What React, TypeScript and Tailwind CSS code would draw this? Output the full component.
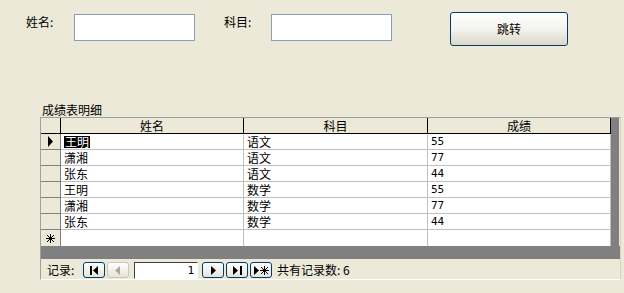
const rows = [
  { name: '王明', subject: '语文', score: '55' },
  { name: '潇湘', subject: '语文', score: '77' },
  { name: '张东', subject: '语文', score: '44' },
  { name: '王明', subject: '数学', score: '55' },
  { name: '潇湘', subject: '数学', score: '77' },
  { name: '张东', subject: '数学', score: '44' },
];

const font = "font-['SimSun','Noto_Sans_CJK_SC',sans-serif]";

function Star({ size = 9 }: { size?: number }) {
  return (
    <svg width={size} height={size} viewBox="0 0 9 9" shapeRendering="crispEdges">
      <path d="M4.5 0 V9 M0 4.5 H9 M1 1 L8 8 M8 1 L1 8" stroke="black" strokeWidth="1" />
    </svg>
  );
}

function NavButton({ children, disabled }: { children: React.ReactNode; disabled?: boolean }) {
  return (
    <div
      className={`flex h-[16px] w-[22px] items-center justify-center rounded-[3px] border ${
        disabled ? 'border-[#c9c7ba] text-[#aca899]' : 'border-[#003c74] text-black'
      } bg-gradient-to-b from-white to-[#e6e3d6]`}
    >
      {children}
    </div>
  );
}

export default function App() {
  return (
    <div className={`h-[293px] w-[624px] overflow-hidden bg-[#ece9d8] text-[12px] leading-none text-black ${font}`}>
      <div className="flex items-start pt-[12px]">
        <div className="ml-[26px] mt-[4px] w-[48px]">姓名:</div>
        <div className="mt-[2px] h-[27px] w-[121px] border border-[#8a9fb3] bg-white" />
        <div className="ml-[29px] mt-[4px] w-[47px]">科目:</div>
        <div className="mt-[2px] h-[27px] w-[121px] border border-[#8a9fb3] bg-white" />
        <button className="ml-[58px] flex h-[34px] w-[118px] items-center justify-center rounded-[3px] border border-[#003c74] bg-gradient-to-b from-white via-[#f4f3ee] to-[#dcd8c8] text-[12px]">
          跳转
        </button>
      </div>

      <div className="ml-[42px] mt-[58px] h-[12px]">成绩表明细</div>

      <div className="ml-[40px] mt-[1px] w-[581px] border-l border-t border-[#a0a0a0] border-b border-b-white border-r border-r-[#d6d2c2]">
        <div className="flex">
          <div className="flex flex-col">
            <div className="flex h-[16px] border-b border-black bg-[#ece9d8]">
              <div className="w-[20px] border-r border-black" />
              <div className="flex w-[183px] items-center justify-center border-r border-black">姓名</div>
              <div className="flex w-[184px] items-center justify-center border-r border-black">科目</div>
              <div className="flex w-[183px] items-center justify-center border-r border-black">成绩</div>
            </div>
            {rows.map((r, i) => (
              <div key={i} className="flex h-[16px]">
                <div className="flex w-[20px] items-center justify-center border-b border-r border-[#808080] bg-[#ece9d8]">
                  {i === 0 && (
                    <svg width="7" height="11" viewBox="0 0 7 11">
                      <path d="M1 0 L6 5.5 L1 11 Z" fill="black" />
                    </svg>
                  )}
                </div>
                <div className="flex w-[183px] items-center border-b border-r border-[#c0c0c0] bg-white pl-[3px]">
                  {i === 0 ? <span className="bg-black px-[1px] text-white">{r.name}</span> : r.name}
                </div>
                <div className="flex w-[184px] items-center border-b border-r border-[#c0c0c0] bg-white pl-[3px]">{r.subject}</div>
                <div className="flex w-[183px] items-center border-b border-r border-[#c0c0c0] bg-white pl-[3px] font-['DejaVu_Sans_Mono',monospace] text-[11px]">{r.score}</div>
              </div>
            ))}
            <div className="flex h-[16px]">
              <div className="flex w-[20px] items-center justify-center border-r border-[#808080] bg-[#ece9d8]">
                <Star />
              </div>
              <div className="w-[183px] border-r border-[#c0c0c0] bg-white" />
              <div className="w-[184px] border-r border-[#c0c0c0] bg-white" />
              <div className="w-[183px] border-r border-[#c0c0c0] bg-white" />
            </div>
          </div>
          <div className="w-[8px] bg-[#808080]" />
        </div>
        <div className="h-[13px] bg-[#808080]" />
        <div className="flex h-[20px] items-center pt-[2px] bg-[#ece9d8]">
          <div className="ml-[6px] w-[36px]">记录:</div>
          <div className="flex gap-[2px]">
            <NavButton>
              <svg width="9" height="9" viewBox="0 0 9 9">
                <rect x="0" y="0" width="2" height="9" fill="currentColor" />
                <path d="M8 0 L3 4.5 L8 9 Z" fill="currentColor" />
              </svg>
            </NavButton>
            <NavButton disabled>
              <svg width="6" height="9" viewBox="0 0 6 9">
                <path d="M5 0 L0 4.5 L5 9 Z" fill="currentColor" />
              </svg>
            </NavButton>
          </div>
          <div className="ml-[5px] flex h-[17px] w-[64px] items-center justify-end border-l border-t border-[#404040] border-b border-b-white border-r border-r-white bg-white pr-[3px] font-['DejaVu_Sans_Mono',monospace] text-[11px]">
            1
          </div>
          <div className="ml-[4px] flex gap-[2px]">
            <NavButton>
              <svg width="6" height="9" viewBox="0 0 6 9">
                <path d="M1 0 L6 4.5 L1 9 Z" fill="currentColor" />
              </svg>
            </NavButton>
            <NavButton>
              <svg width="9" height="9" viewBox="0 0 9 9">
                <path d="M0 0 L5 4.5 L0 9 Z" fill="currentColor" />
                <rect x="7" y="0" width="2" height="9" fill="currentColor" />
              </svg>
            </NavButton>
            <NavButton>
              <span className="flex items-center gap-[1px]">
                <svg width="5" height="9" viewBox="0 0 5 9">
                  <path d="M0 0 L5 4.5 L0 9 Z" fill="currentColor" />
                </svg>
                <Star size={9} />
              </span>
            </NavButton>
          </div>
          <div className="ml-[5px]">共有记录数: 6</div>
        </div>
      </div>
    </div>
  );
}
